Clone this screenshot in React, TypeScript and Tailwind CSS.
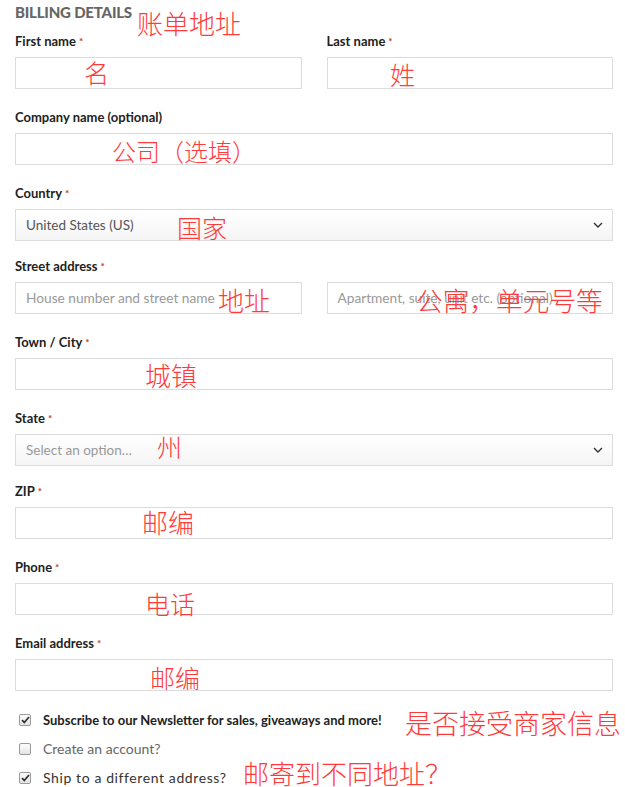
import React from "react";

const FONT = { fontFamily: "Lato, 'Open Sans', sans-serif" };
const CJK = { fontFamily: "'Noto Sans CJK SC', sans-serif" };

function Label({ text, required }: { text: string; required?: boolean }) {
  return (
    <div className="h-[18px] leading-[18px] text-[13px] font-bold text-[#222]">
      {text}
      {required && <span className="ml-[3px] text-[10px] align-top text-[#c0392b]">*</span>}
    </div>
  );
}

function Input({ placeholder }: { placeholder?: string }) {
  return (
    <div className="mt-[7px] h-[32px] border border-[#dcdcdc] bg-white flex items-center px-[10px] text-[13.7px] text-[#999] whitespace-nowrap overflow-hidden">
      {placeholder}
    </div>
  );
}

function Select({ value, muted }: { value: string; muted?: boolean }) {
  return (
    <div className="mt-[7px] h-[32px] border border-[#dcdcdc] bg-gradient-to-b from-[#ffffff] to-[#f5f5f5] flex items-center justify-between pl-[10px] pr-[9px] text-[13.5px]">
      <span className={muted ? "text-[#999]" : "text-[#555]"}>{value}</span>
      <svg width="10" height="6" viewBox="0 0 10 6" fill="none">
        <path d="M1 1l4 4 4-4" stroke="#333" strokeWidth="1.4" />
      </svg>
    </div>
  );
}

function Field({
  label,
  required,
  short,
  children,
}: {
  label: string;
  required?: boolean;
  short?: boolean;
  children: React.ReactNode;
}) {
  return (
    <div className={short ? "mb-[16px]" : "mb-[19px]"}>
      <Label text={label} required={required} />
      {children}
    </div>
  );
}

function Check({ checked, children }: { checked?: boolean; children: React.ReactNode }) {
  return (
    <div className="h-[29px] flex items-center">
      <span className="ml-[4px] w-[12px] h-[12px] rounded-[2px] border border-[#9a9a9a] bg-gradient-to-b from-[#fdfdfd] to-[#e4e4e4] flex items-center justify-center">
        {checked && (
          <svg width="9" height="8" viewBox="0 0 9 8" fill="none">
            <path d="M1 4.2l2.3 2.3L8 1" stroke="#333" strokeWidth="1.8" />
          </svg>
        )}
      </span>
      <span className="ml-[12px]">{children}</span>
    </div>
  );
}

const notes: { t: string; x: number; y: number; s?: number }[] = [
  { t: "账单地址", x: 137, y: 10, s: 26 },
  { t: "名", x: 84, y: 60, s: 25 },
  { t: "姓", x: 390, y: 62, s: 25 },
  { t: "公司（选填）", x: 112, y: 139, s: 24 },
  { t: "国家", x: 177, y: 215, s: 25 },
  { t: "地址", x: 218, y: 287, s: 26 },
  { t: "公寓，单元号等", x: 416, y: 287, s: 26.7 },
  { t: "城镇", x: 145, y: 362, s: 26 },
  { t: "州", x: 157, y: 434, s: 25 },
  { t: "邮编", x: 142, y: 509, s: 26 },
  { t: "电话", x: 145, y: 591, s: 25 },
  { t: "邮编", x: 150, y: 665, s: 25 },
  { t: "是否接受商家信息", x: 405, y: 709, s: 27 },
  { t: "邮寄到不同地址？", x: 243, y: 760, s: 26 },
];

export default function App() {
  return (
    <div className="relative w-[625px] h-[787px] bg-white overflow-hidden" style={FONT}>
      <div className="pl-[15px] pr-[12px] pt-[3px]">
        <div className="h-[18px] leading-[18px] text-[15px] font-black text-[#666] tracking-[-0.2px]">BILLING DETAILS</div>
        <div className="mt-[11px] grid grid-cols-2 gap-x-[25px]">
          <Field label="First name" required>
            <Input />
          </Field>
          <Field label="Last name" required>
            <Input />
          </Field>
        </div>
        <Field label="Company name (optional)">
          <Input />
        </Field>
        <Field label="Country" required short>
          <Select value="United States (US)" />
        </Field>
        <div className="mb-[19px]">
          <Label text="Street address" required />
          <div className="grid grid-cols-2 gap-x-[25px]">
            <Input placeholder="House number and street name" />
            <Input placeholder="Apartment, suite, unit etc. (optional)" />
          </div>
        </div>
        <Field label="Town / City" required>
          <Input />
        </Field>
        <Field label="State" required short>
          <Select value="Select an option…" muted />
        </Field>
        <Field label="ZIP" required>
          <Input />
        </Field>
        <Field label="Phone" required>
          <Input />
        </Field>
        <Field label="Email address" required>
          <Input />
        </Field>
        <div className="-mt-[5px] text-[14px]">
          <Check checked>
            <span className="font-bold text-[#222] text-[13px]">Subscribe to our Newsletter for sales, giveaways and more!</span>
          </Check>
          <Check>
            <span className="text-[#666]">Create an account?</span>
          </Check>
          <Check checked>
            <span className="text-[#333] tracking-[0.6px]">Ship to a different address?</span>
          </Check>
        </div>
      </div>
      {notes.map((n, i) => (
        <div
          key={i}
          className="absolute whitespace-nowrap text-[#ff3a3a] font-light leading-none"
          style={{ ...CJK, left: n.x, top: n.y, fontSize: n.s }}
        >
          {n.t}
        </div>
      ))}
    </div>
  );
}
